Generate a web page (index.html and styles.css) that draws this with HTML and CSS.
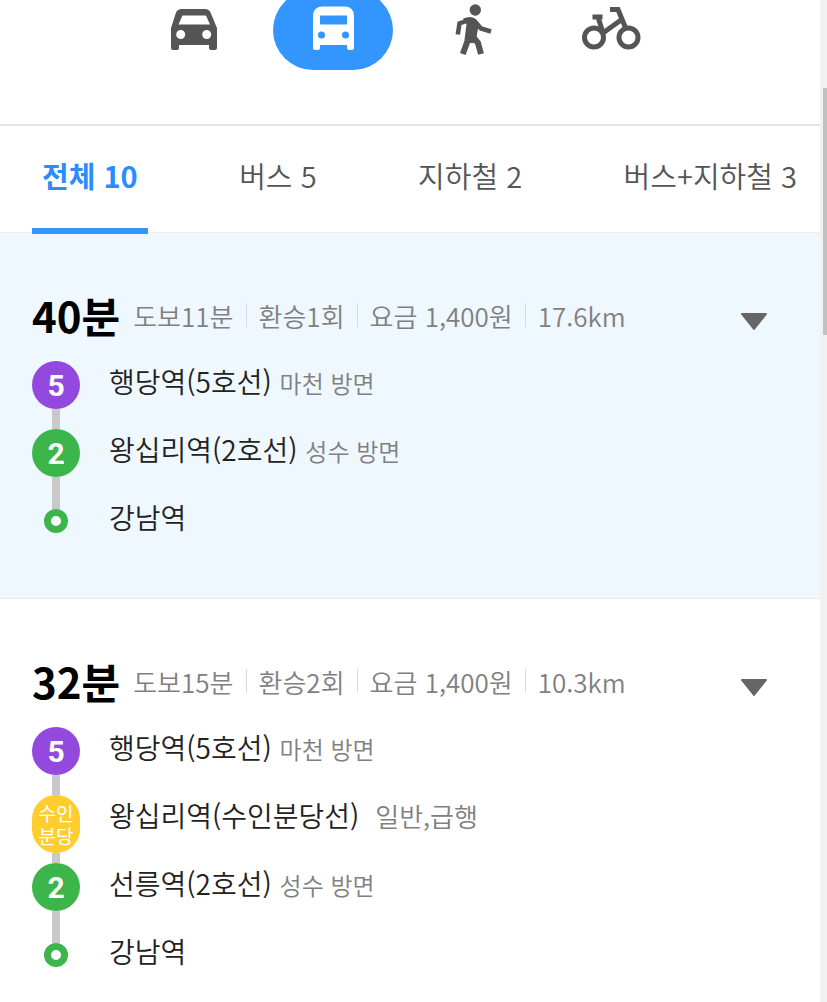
FILE: index.html
```html
<!DOCTYPE html>
<html lang="ko">
<head>
    <meta charset="UTF-8">
    <meta name="viewport" content="width=device-width, initial-scale=1.0">
    <title>길찾기</title>
    <link rel="stylesheet" href="styles.css">
</head>
<body>
    <main class="panel">
        <nav class="modes">
            <button class="mode" type="button" aria-label="자동차">
                <svg viewBox="0 0 60 60">
                    <path fill="currentColor" fill-rule="evenodd" d="M7 28L12 12.500Q13.500 9 17.500 9H41Q45 9 46.500 12.500L53 28V48Q53 50 51 50H47Q45 50 45 48V45H15V48Q15 50 13 50H9Q7 50 7 48ZM18.500 15.500L14.500 24.500H46L42 15.500ZM12.200 34.500a4.500 4.500 0 1 0 9 0a4.500 4.500 0 1 0-9 0ZM38.200 34.500a4.500 4.500 0 1 0 9 0a4.500 4.500 0 1 0-9 0Z"/>
                </svg>
            </button>
            <button class="mode active" type="button" aria-label="대중교통">
                <svg viewBox="0 0 60 60">
                    <path fill="currentColor" fill-rule="evenodd" d="M10 16Q10 6.500 20 6.500H41Q51 6.500 51 16V48Q51 50 49 50H46Q44 50 44 48V45H17V48Q17 50 15 50H12Q10 50 10 48ZM17 15.500V24.500H44V15.500ZM15 35a3.500 3.500 0 1 0 7 0a3.500 3.500 0 1 0-7 0ZM39 35a3.500 3.500 0 1 0 7 0a3.500 3.500 0 1 0-7 0Z"/>
                </svg>
            </button>
            <button class="mode" type="button" aria-label="도보">
                <svg viewBox="0 0 60 60" fill="none" stroke="currentColor" stroke-width="4.500">
                    <circle cx="33.300" cy="10" r="5.700" fill="currentColor" stroke="none"/>
                    <path fill="currentColor" stroke="none" d="M21 18.500Q29 15.500 33 18.500L37 23L34.500 37L37 43L26 43L22.500 40L24.500 24Z"/>
                    <path d="M15.800 34.500L17.500 23.500L27 20M32 20.500L39 28.500L49 31.500"/>
                    <path stroke-width="6" d="M27 37L20.800 54M31.500 37.500L36 43L39 54"/>
                </svg>
            </button>
            <button class="mode" type="button" aria-label="자전거">
                <svg viewBox="0 0 60 60" fill="none" stroke="currentColor" stroke-width="5">
                    <circle cx="13" cy="37.500" r="9.500"/>
                    <circle cx="47.500" cy="37.500" r="9.500"/>
                    <path d="M11.500 17H21.500M17 17L22 33M22 33L40 20M29 9.500H37L45 29"/>
                </svg>
            </button>
        </nav>

        <nav class="tabs">
            <button class="tab active" type="button">전체 10</button>
            <button class="tab" type="button">버스 5</button>
            <button class="tab" type="button">지하철 2</button>
            <button class="tab" type="button">버스+지하철 3</button>
        </nav>

        <section class="route selected">
            <header class="summary">
                <h2>40분</h2>
                <ul class="info">
                    <li>도보11분</li>
                    <li>환승1회</li>
                    <li>요금 1,400원</li>
                    <li>17.6km</li>
                </ul>
                <button class="toggle" type="button" aria-label="상세보기">
                    <svg viewBox="0 0 28 18"><path d="M2 1H26L14 16Z"/></svg>
                </button>
            </header>
            <ol class="steps">
                <li>
                    <div class="rail"><span class="badge line5">5</span></div>
                    <p>행당역(5호선) <small>마천 방면</small></p>
                </li>
                <li>
                    <div class="rail"><span class="badge line2">2</span></div>
                    <p>왕십리역(2호선) <small>성수 방면</small></p>
                </li>
                <li>
                    <div class="rail"><span class="dot"></span></div>
                    <p>강남역</p>
                </li>
            </ol>
        </section>

        <section class="route">
            <header class="summary">
                <h2>32분</h2>
                <ul class="info">
                    <li>도보15분</li>
                    <li>환승2회</li>
                    <li>요금 1,400원</li>
                    <li>10.3km</li>
                </ul>
                <button class="toggle" type="button" aria-label="상세보기">
                    <svg viewBox="0 0 28 18"><path d="M2 1H26L14 16Z"/></svg>
                </button>
            </header>
            <ol class="steps">
                <li>
                    <div class="rail"><span class="badge line5">5</span></div>
                    <p>행당역(5호선) <small>마천 방면</small></p>
                </li>
                <li>
                    <div class="rail tall"><span class="badge suin">수인<br>분당</span></div>
                    <p>왕십리역(수인분당선) <span class="train">일반,급행</span></p>
                </li>
                <li>
                    <div class="rail"><span class="badge line2">2</span></div>
                    <p>선릉역(2호선) <small>성수 방면</small></p>
                </li>
                <li>
                    <div class="rail"><span class="dot"></span></div>
                    <p>강남역</p>
                </li>
            </ol>
        </section>
    </main>
    <div class="scrollbar"><div class="thumb"></div></div>
</body>
</html>
```
FILE: styles.css
```css
* {
    margin: 0;
    padding: 0;
    box-sizing: border-box;
}

body {
    display: flex;
    height: 100vh;
    overflow: hidden;
    font-family: "Noto Sans CJK KR", sans-serif;
    font-weight: 350;
    background-color: #fff;
    color: #222;
}

button {
    border: none;
    background: none;
    font: inherit;
    color: inherit;
    cursor: pointer;
}

ul, ol {
    list-style: none;
}

.panel {
    flex: 1;
    min-width: 0;
    overflow: hidden;
}

/* 이동 수단 */
.modes {
    display: flex;
    justify-content: center;
    gap: 19px;
    height: 126px;
    padding-right: 16px;
    border-bottom: 2px solid #e3e3e3;
}

.mode {
    width: 120px;
    height: 80px;
    margin-top: -10px;
    border-radius: 40px;
    color: #555;
}

.mode svg {
    display: block;
    width: 60px;
    height: 60px;
    margin: 0 auto;
}

.mode.active {
    background-color: #3396ff;
    color: #fff;
}

/* 탭 */
.tabs {
    display: flex;
    justify-content: space-between;
    height: 107px;
    padding: 0 13px 0 32px;
    border-bottom: 1px solid #e9edf1;
}

.tab {
    height: 108px;
    padding: 0 10px 4px;
    border-bottom: 6px solid transparent;
    font-size: 29px;
    white-space: nowrap;
    color: #555;
}

.tab.active {
    border-color: #3396ff;
    font-weight: 700;
    color: #2b8cff;
}

/* 경로 */
.route {
    padding: 52px 52px 43px 32px;
    border-bottom: 1px solid #e6ebf0;
}

.route.selected {
    background-color: #eff7ff;
}

.summary {
    display: flex;
    align-items: center;
    height: 66px;
    padding-bottom: 6px;
}

.summary h2 {
    font-size: 42px;
    font-weight: 700;
    line-height: 60px;
    color: #000;
}

.info {
    display: flex;
    margin-left: 13px;
    font-size: 26px;
    white-space: nowrap;
    color: #808080;
}

.info li {
    display: flex;
    align-items: center;
}

.info li + li::before {
    content: "";
    width: 1px;
    height: 24px;
    margin: 0 12px;
    background-color: #d8dce0;
}

.toggle {
    margin-left: auto;
    padding-top: 14px;
}

.toggle svg {
    display: block;
    width: 28px;
    height: 18px;
    fill: #666;
    stroke: #666;
    stroke-width: 2;
    stroke-linejoin: round;
}

.steps li {
    display: flex;
    align-items: center;
    gap: 29px;
    height: 68px;
}

.steps p {
    padding-bottom: 8px;
    font-size: 28px;
    white-space: nowrap;
}

.steps small {
    font-size: 24px;
    color: #808080;
}

.train {
    margin-left: 8px;
    font-size: 26px;
    color: #808080;
}

/* 노선 아이콘과 연결선 */
.rail {
    display: flex;
    flex-direction: column;
    align-items: center;
    width: 48px;
    height: 100%;
}

.rail::before,
.rail::after {
    content: "";
    flex: 1;
    width: 8px;
    background-color: #c9c9c9;
}

.rail.tall::after {
    flex: none;
}

.steps li:first-child .rail::before,
.steps li:last-child .rail::after {
    background-color: transparent;
}

.badge {
    display: flex;
    align-items: center;
    justify-content: center;
    width: 48px;
    height: 48px;
    border-radius: 24px;
    font-family: Roboto, sans-serif;
    font-size: 30px;
    font-weight: 700;
    color: #fff;
}

.line5 {
    background-color: #9349de;
}

.line2 {
    background-color: #3cb54a;
}

.suin {
    height: 58px;
    background-color: #ffcd2e;
    font-family: "Noto Sans CJK KR", sans-serif;
    font-size: 19px;
    font-weight: 400;
    line-height: 23px;
}

.dot {
    width: 24px;
    height: 24px;
    border: 7px solid #3cb54a;
    border-radius: 50%;
    background-color: #fff;
}

/* 스크롤바 */
.scrollbar {
    width: 7px;
    padding: 88px 0 0 3px;
    background-color: #f1f1f1;
}

.thumb {
    height: 247px;
    background-color: #c1c1c1;
}
```
